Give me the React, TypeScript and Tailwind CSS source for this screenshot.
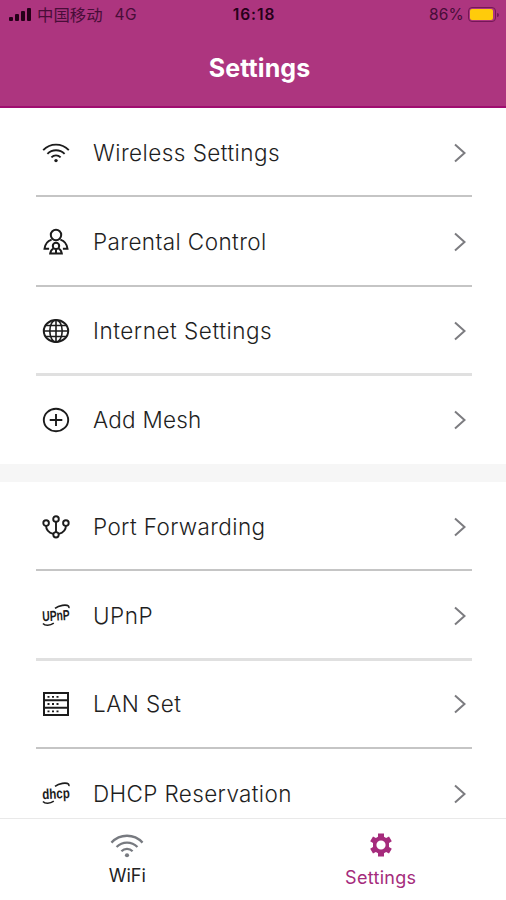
import React from "react";

const latin = "font-['Inter','Liberation_Sans',sans-serif]";

function WifiIcon({ className }: { className?: string }) {
  return (
    <svg viewBox="0 0 28 20" className={className} fill="none" stroke="currentColor" strokeWidth="1.9">
      <path d="M1.2 7.2C8.3-.3 19.7-.3 26.8 7.2" />
      <path d="M5.4 10.8c4.8-4.8 12.4-4.8 17.2 0" />
      <path d="M9.4 14.3c2.6-2.6 6.6-2.6 9.2 0" />
      <circle cx="14" cy="17.6" r="1.7" fill="currentColor" stroke="none" />
    </svg>
  );
}

function ParentIcon() {
  return (
    <svg viewBox="0 0 26 28" className="h-7 w-[26px]" fill="none" stroke="currentColor" strokeWidth="2">
      <circle cx="13" cy="7" r="5.2" />
      <path d="M8.6 11.6C4.6 13 2 16 1.5 20.8h4.6M17.4 11.6c4 1.4 6.6 4.4 7.1 9.2h-4.6" />
      <circle cx="13" cy="17.9" r="3.2" />
      <path d="M10.4 20.5c-1.8 1-2.9 2.7-3.2 5h11.6c-.3-2.3-1.4-4-3.2-5M13 21.6v3.4" />
    </svg>
  );
}

function GlobeIcon() {
  return (
    <svg viewBox="0 0 28 26" className="h-[26px] w-7" fill="none" stroke="currentColor" strokeWidth="1.6">
      <ellipse cx="14" cy="13" rx="12.2" ry="11" strokeWidth="2" />
      <ellipse cx="14" cy="13" rx="6.2" ry="11" />
      <path d="M14 2v22M2 13h24M4 7.5h20M4 18.5h20" />
    </svg>
  );
}

function PlusIcon() {
  return (
    <svg viewBox="0 0 28 26" className="h-[26px] w-7" fill="none" stroke="currentColor" strokeWidth="1.9">
      <ellipse cx="14" cy="13" rx="12.2" ry="11.2" />
      <path d="M14 7v12M7.7 13h12.6" />
    </svg>
  );
}

function PortIcon() {
  return (
    <svg viewBox="0 0 28 24" className="h-6 w-7" fill="none" stroke="currentColor" strokeWidth="1.9">
      <circle cx="14" cy="4" r="2.8" />
      <circle cx="4.1" cy="8.1" r="2.8" />
      <circle cx="23.9" cy="8.1" r="2.8" />
      <circle cx="14" cy="19.8" r="2.7" />
      <path d="M14 6.8v10.3M4.1 10.9c0 4 2.6 6.6 7.2 8M23.9 10.9c0 4-2.6 6.6-7.2 8" />
    </svg>
  );
}

function SwooshWord({ word }: { word: string }) {
  return (
    <svg viewBox="0 0 34 30" className="-my-1 h-[30px] w-[34px] overflow-visible" fill="none" stroke="currentColor">
      <text
        x="3.2"
        y="19.6"
        textLength="27.6"
        lengthAdjust="spacingAndGlyphs"
        transform="rotate(-3 17 15)"
        fill="currentColor"
        stroke="none"
        className="font-['Liberation_Sans',sans-serif] text-[14.5px] font-bold"
      >
        {word}
      </text>
      <path d="M16 7.4C20 4.3 27.3 3.2 29.6 5.2c.6.6.5 1.2 0 1.8M4 22.4c2 2.6 7 2.4 10.8-.2" strokeWidth="1.6" />
    </svg>
  );
}

function ServerIcon() {
  return (
    <svg viewBox="0 0 28 26" className="h-[26px] w-7" fill="none" stroke="currentColor">
      <path d="M2 2h24v22H2zM2 9.3h24M2 16.7h24" strokeWidth="2" />
      <path d="M5.5 5.8h2M10 5.8h2M14.5 5.8h2M5.5 13h2M10 13h2M14.5 13h2M5.5 20.3h2M10 20.3h2M14.5 20.3h2" strokeWidth="1.8" />
    </svg>
  );
}

function Row({ icon, label, size, tracking }: { icon: React.ReactNode; label: string; size: string; tracking: string }) {
  return (
    <div className={`mr-[34px] ml-9 flex shrink-0 items-center pr-[5px] text-[#1c1c1c] ${size}`}>
      <span className="flex w-10 shrink-0 justify-center">{icon}</span>
      <span className={`ml-[17px] whitespace-nowrap text-[22.5px] leading-7 font-light text-[#1f1f1f] ${tracking}`}>{label}</span>
      <svg viewBox="0 0 14 22" className="ml-auto h-[22px] w-3.5" fill="none" stroke="#7c7c80" strokeWidth="2">
        <path d="M2 2.5l9.5 8.5L2 19.5" />
      </svg>
    </div>
  );
}

export default function App() {
  const line = "border-b-2 border-[#c5c5c5]";
  const paleLine = "border-b-3 border-[#e0e0e0]";
  return (
    <div className={`flex h-[900px] w-[506px] flex-col overflow-hidden bg-white ${latin}`}>
      <header className="h-[108px] shrink-0 border-b-2 border-[#a00d70] bg-[#ad357f]">
        <div className="flex h-[29px] items-center pr-[7px] pl-[9px] text-[15.5px] text-[#480d38]">
          <div className="flex flex-1 items-center">
            <span className="flex h-[14px] items-end gap-[2px] pb-px text-[#250019]">
              <i className="h-1 w-1 rounded-[1px] bg-current" />
              <i className="h-[7px] w-1 rounded-[1px] bg-current" />
              <i className="h-[10px] w-1 rounded-[1px] bg-current" />
              <i className="h-[13px] w-1 rounded-[1px] bg-current" />
            </span>
            <span className="-mt-[2px] ml-[6px] font-['Noto_Sans_CJK_SC',sans-serif] text-[16.4px] leading-7">中国移动</span>
            <span className="ml-3 tracking-[0.3px]">4G</span>
          </div>
          <span className="font-semibold tracking-[0.9px] text-[#260019]">16:18</span>
          <div className="flex flex-1 items-center justify-end">
            <span className="tracking-[0.2px]">86%</span>
            <span className="ml-1 flex h-[15px] w-7 items-center rounded-[4px] border border-[#741857] px-[1px]">
              <i className="h-[11px] w-[23px] rounded-[2px] bg-[#ffcb0b]" />
            </span>
            <i className="ml-[1px] h-1 w-[2px] rounded-r bg-[#741857]" />
          </div>
        </div>
        <h1 className="mt-[23px] pl-[13px] text-center text-[25px] leading-8 font-bold tracking-[0.1px] text-white">Settings</h1>
      </header>
      <main className="flex min-h-0 flex-1 flex-col overflow-hidden">
        <Row icon={<WifiIcon className="h-5 w-7" />} label="Wireless Settings" size={`h-[89px] pt-[3px] ${line}`} tracking="tracking-[0.45px]" />
        <Row icon={<ParentIcon />} label="Parental Control" size={`h-[90px] pt-px ${line}`} tracking="tracking-[0.4px]" />
        <Row icon={<GlobeIcon />} label="Internet Settings" size={`h-[89px] pt-px ${paleLine}`} tracking="tracking-[0.53px]" />
        <Row icon={<PlusIcon />} label="Add Mesh" size="h-[88px]" tracking="tracking-[0.25px]" />
        <div className="h-[18px] shrink-0 bg-[#f6f6f6]" />
        <Row icon={<PortIcon />} label="Port Forwarding" size={`h-[89px] pt-[2px] ${line}`} tracking="tracking-[0.38px]" />
        <Row icon={<SwooshWord word="UPnP" />} label="UPnP" size={`h-[90px] pt-[2px] ${paleLine}`} tracking="tracking-[0.5px]" />
        <Row icon={<ServerIcon />} label="LAN Set" size={`h-[88px] ${line}`} tracking="tracking-[0.45px]" />
        <Row icon={<SwooshWord word="dhcp" />} label="DHCP Reservation" size="h-[89px] pt-px" tracking="tracking-[0.36px]" />
      </main>
      <nav className="flex h-[82px] shrink-0 border-t border-[#e9e9e9] bg-white">
        <div className="flex flex-1 flex-col items-center pt-[14px] pl-[2px] text-[#777a80]">
          <WifiIcon className="h-[26px] w-[34px]" />
          <span className="mt-[5px] text-[18px] leading-6 text-[#222]">WiFi</span>
        </div>
        <div className="flex flex-1 flex-col items-center pt-[14px] pl-[3px] text-[#a52b7c]">
          <svg viewBox="0 0 24 24" className="h-6 w-6" fill="currentColor" fillRule="evenodd">
            <path d="M9 .5h6v3.3l2.1 1.2L20 3.4l2.8 4.9-2.8 1.7v4l2.8 1.7-2.8 4.9-2.9-1.6-2.1 1.2v3.3H9v-3.3L6.9 19 4 20.6l-2.8-4.9L4 14v-4L1.2 8.3 4 3.4 6.9 5 9 3.8zM12 7.4a4.6 4.6 0 100 9.2 4.6 4.6 0 000-9.2z" />
          </svg>
          <span className="mt-[9px] text-[18px] leading-6 tracking-[0.3px]">Settings</span>
        </div>
      </nav>
    </div>
  );
}
